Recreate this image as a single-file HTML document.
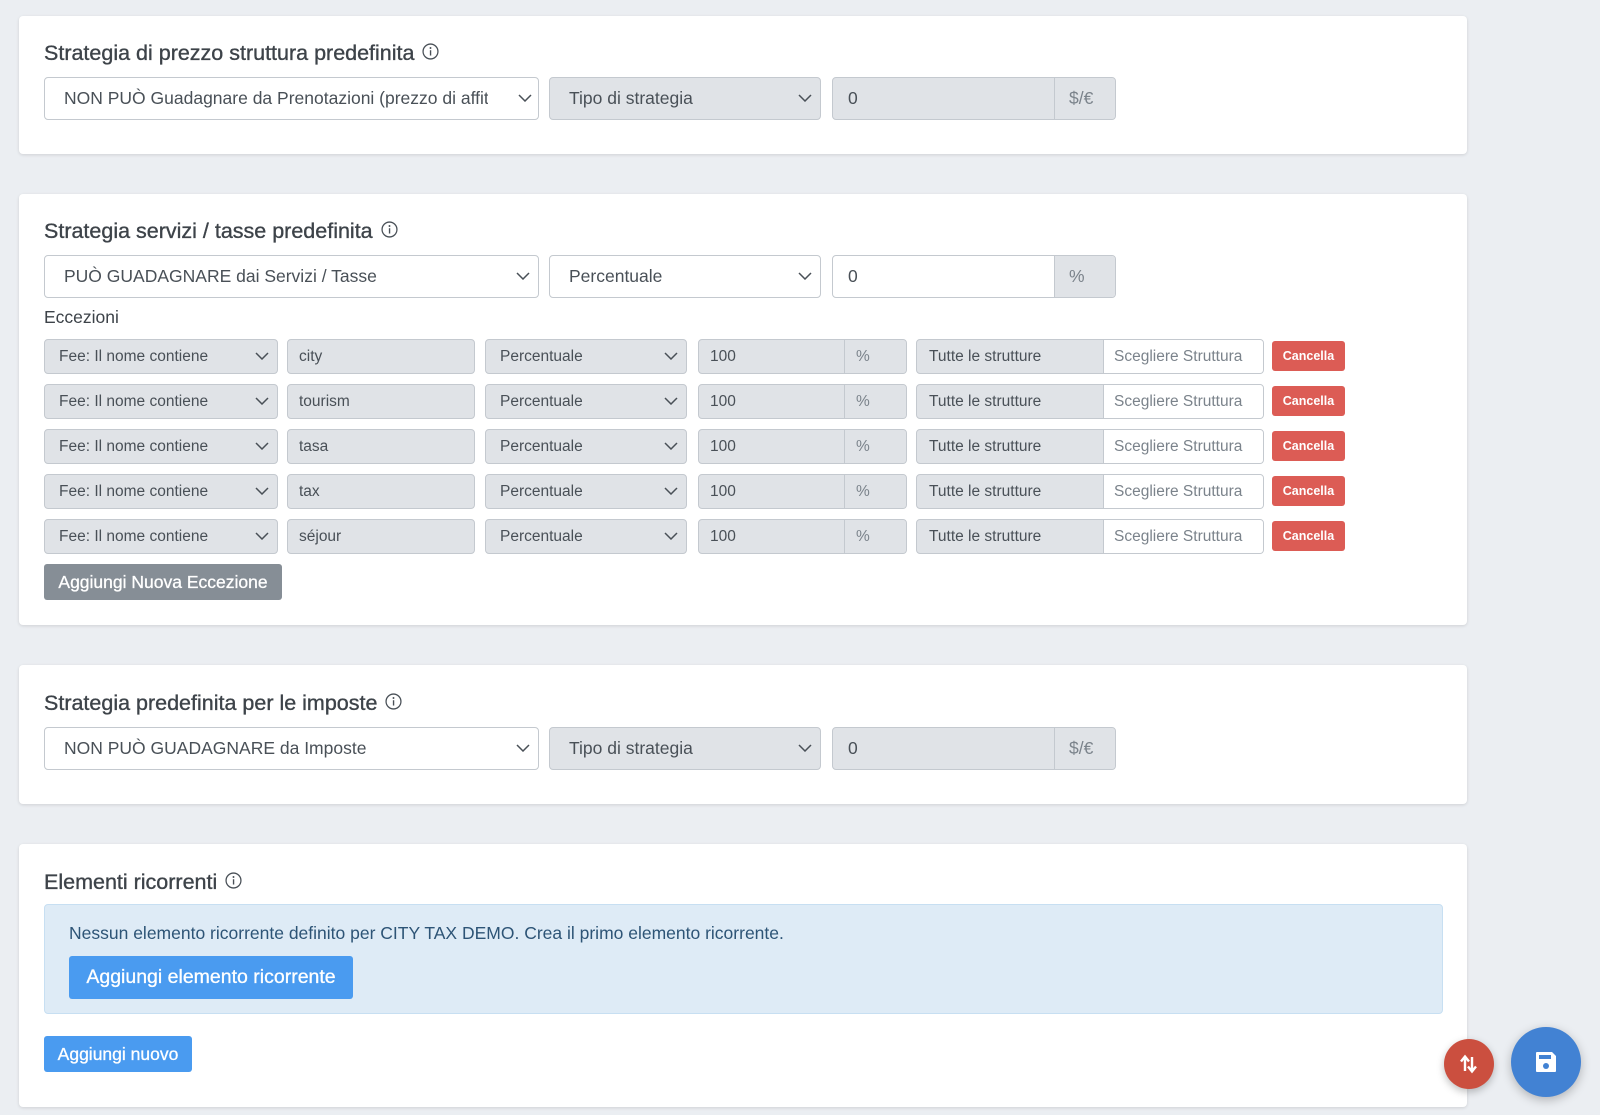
<!DOCTYPE html>
<html><head><meta charset="utf-8"><style>
*{box-sizing:border-box;margin:0;padding:0}
body{width:1600px;height:1115px;background:#ebeef2;font-family:"Liberation Sans",sans-serif;color:#495057;position:relative;overflow:hidden}
.card{position:absolute;left:19px;width:1448px;background:#fff;border-radius:4px;box-shadow:0 1px 3px rgba(0,0,0,.12)}
.t{position:absolute;left:44px;font-size:21.5px;color:#3d4349;white-space:nowrap;-webkit-text-stroke:0.35px #3d4349}
.t svg{vertical-align:0px;margin-left:8px;-webkit-text-stroke:0}
.b{position:absolute;border:1px solid #c4c9cf;border-radius:4px;display:flex;align-items:center;white-space:nowrap;overflow:hidden;color:#495057}
.g{background:#e0e3e7}
.w{background:#fff}
.L{font-size:17.5px;padding-left:19px;height:43px}
.S{font-size:15.5px;padding-left:14px;height:35px}
.ch{position:absolute;right:8px;top:50%;margin-top:-5px}
.ad{position:absolute;top:0;bottom:0;right:0;border-left:1px solid #c4c9cf;display:flex;align-items:center;padding-left:14px;color:#7b838b;background:#e0e3e7}
.btn{position:absolute;color:#fff;border-radius:3px;display:flex;align-items:center;justify-content:center;white-space:nowrap}
.red{background:#dc5c55;font-size:12.5px;font-weight:bold}
</style></head><body>

<svg width="0" height="0" style="position:absolute"><defs>
<symbol id="chv" viewBox="0 0 14 8"><polyline points="1,1 7,7 13,1" fill="none" stroke="#495057" stroke-width="1.5"/></symbol>
<symbol id="inf" viewBox="0 0 16 16"><circle cx="8" cy="8" r="7" fill="none" stroke="#495057" stroke-width="1.2"/><rect x="7.4" y="6.8" width="1.3" height="5" fill="#495057"/><circle cx="8" cy="4.7" r=".9" fill="#495057"/></symbol>
</defs></svg>

<!-- card 1 -->
<div class="card" style="top:16px;height:138px"></div>
<div class="t" style="top:41px">Strategia di prezzo struttura predefinita<svg width="17" height="17"><use href="#inf"/></svg></div>
<div class="b w L" style="left:44px;top:77px;width:495px">NON PUÒ Guadagnare da Prenotazioni (prezzo di affitt<svg class="ch" width="14" height="8" style="right:6px;background:#fff;box-shadow:-20px 0 0 10px #fff"><use href="#chv"/></svg></div>
<div class="b g L" style="left:549px;top:77px;width:272px">Tipo di strategia<svg class="ch" width="14" height="8"><use href="#chv"/></svg></div>
<div class="b g L" style="left:832px;top:77px;width:284px;padding-left:15px">0<div class="ad" style="width:61px">$/€</div></div>

<!-- card 2 -->
<div class="card" style="top:194px;height:431px"></div>
<div class="t" style="top:219px">Strategia servizi / tasse predefinita<svg width="17" height="17"><use href="#inf"/></svg></div>
<div class="b w L" style="left:44px;top:255px;width:495px">PUÒ GUADAGNARE dai Servizi / Tasse<svg class="ch" width="14" height="8"><use href="#chv"/></svg></div>
<div class="b w L" style="left:549px;top:255px;width:272px">Percentuale<svg class="ch" width="14" height="8"><use href="#chv"/></svg></div>
<div class="b w L" style="left:832px;top:255px;width:284px;padding-left:15px">0<div class="ad" style="width:61px">%</div></div>
<div style="position:absolute;left:44px;top:307px;font-size:17.5px;color:#3d4349">Eccezioni</div>

<div id="rows"></div>
<script>
var names=["city","tourism","tasa","tax","séjour"],h="";
names.forEach(function(n,i){var y=339+i*45.1;
h+='<div class="b g S" style="left:44px;top:'+y+'px;width:234px">Fee: Il nome contiene<svg class="ch" width="14" height="8"><use href="#chv"/></svg></div>'+
'<div class="b g S" style="left:287px;top:'+y+'px;width:188px;padding-left:11px">'+n+'</div>'+
'<div class="b g S" style="left:485px;top:'+y+'px;width:202px">Percentuale<svg class="ch" width="14" height="8"><use href="#chv"/></svg></div>'+
'<div class="b g S" style="left:698px;top:'+y+'px;width:209px;padding-left:11px">100<div class="ad" style="width:62px;padding-left:11px">%</div></div>'+
'<div class="b g S" style="left:916px;top:'+y+'px;width:348px;padding-left:12px">Tutte le strutture<div class="ad" style="width:160px;background:#fff;color:#7b838b;padding-left:10px">Scegliere Struttura</div></div>'+
'<div class="btn red" style="left:1272px;top:'+(y+2)+'px;width:73px;height:30px">Cancella</div>';});
document.getElementById("rows").innerHTML=h;
</script>
<div class="btn" style="left:44px;top:564px;width:238px;height:36px;background:#868e96;font-size:17.5px;-webkit-text-stroke:0.3px #fff">Aggiungi Nuova Eccezione</div>

<!-- card 3 -->
<div class="card" style="top:665px;height:139px"></div>
<div class="t" style="top:691px">Strategia predefinita per le imposte<svg width="17" height="17"><use href="#inf"/></svg></div>
<div class="b w L" style="left:44px;top:727px;width:495px">NON PUÒ GUADAGNARE da Imposte<svg class="ch" width="14" height="8"><use href="#chv"/></svg></div>
<div class="b g L" style="left:549px;top:727px;width:272px">Tipo di strategia<svg class="ch" width="14" height="8"><use href="#chv"/></svg></div>
<div class="b g L" style="left:832px;top:727px;width:284px;padding-left:15px">0<div class="ad" style="width:61px">$/€</div></div>

<!-- card 4 -->
<div class="card" style="top:844px;height:263px"></div>
<div class="t" style="top:870px">Elementi ricorrenti<svg width="17" height="17"><use href="#inf"/></svg></div>
<div style="position:absolute;left:44px;top:904px;width:1399px;height:110px;background:#deebf6;border:1px solid #c7dff2;border-radius:4px"></div>
<div style="position:absolute;left:69px;top:923px;font-size:17.5px;color:#2d5476">Nessun elemento ricorrente definito per CITY TAX DEMO. Crea il primo elemento ricorrente.</div>
<div class="btn" style="left:69px;top:956px;width:284px;height:43px;background:#4a9bf0;font-size:19.5px;-webkit-text-stroke:0.3px #fff">Aggiungi elemento ricorrente</div>
<div class="btn" style="left:44px;top:1036px;width:148px;height:36px;background:#4a9bf0;font-size:17.5px;-webkit-text-stroke:0.3px #fff">Aggiungi nuovo</div>

<!-- FABs -->
<div style="position:absolute;left:1444px;top:1039px;width:50px;height:50px;border-radius:50%;background:#cb4f3f;box-shadow:0 3px 8px rgba(0,0,0,.25)">
<svg width="50" height="50" viewBox="0 0 50 50"><path d="M21 32V19M17 22.5l4-5 4 5M28 18v13M24 27.5l4 5 4-5" stroke="#fff" stroke-width="2.4" fill="none"/></svg></div>
<div style="position:absolute;left:1511px;top:1027px;width:70px;height:70px;border-radius:50%;background:#4282d3;box-shadow:0 3px 10px rgba(0,0,0,.25)">
<svg width="70" height="70" viewBox="0 0 70 70"><path d="M26 25h15l4 4v15a1 1 0 0 1-1 1H26a1 1 0 0 1-1-1V26a1 1 0 0 1 1-1z" fill="#fff"/><rect x="28" y="28" width="12" height="4" fill="#4282d3"/><circle cx="35" cy="39" r="3" fill="#4282d3"/></svg></div>
</body></html>
